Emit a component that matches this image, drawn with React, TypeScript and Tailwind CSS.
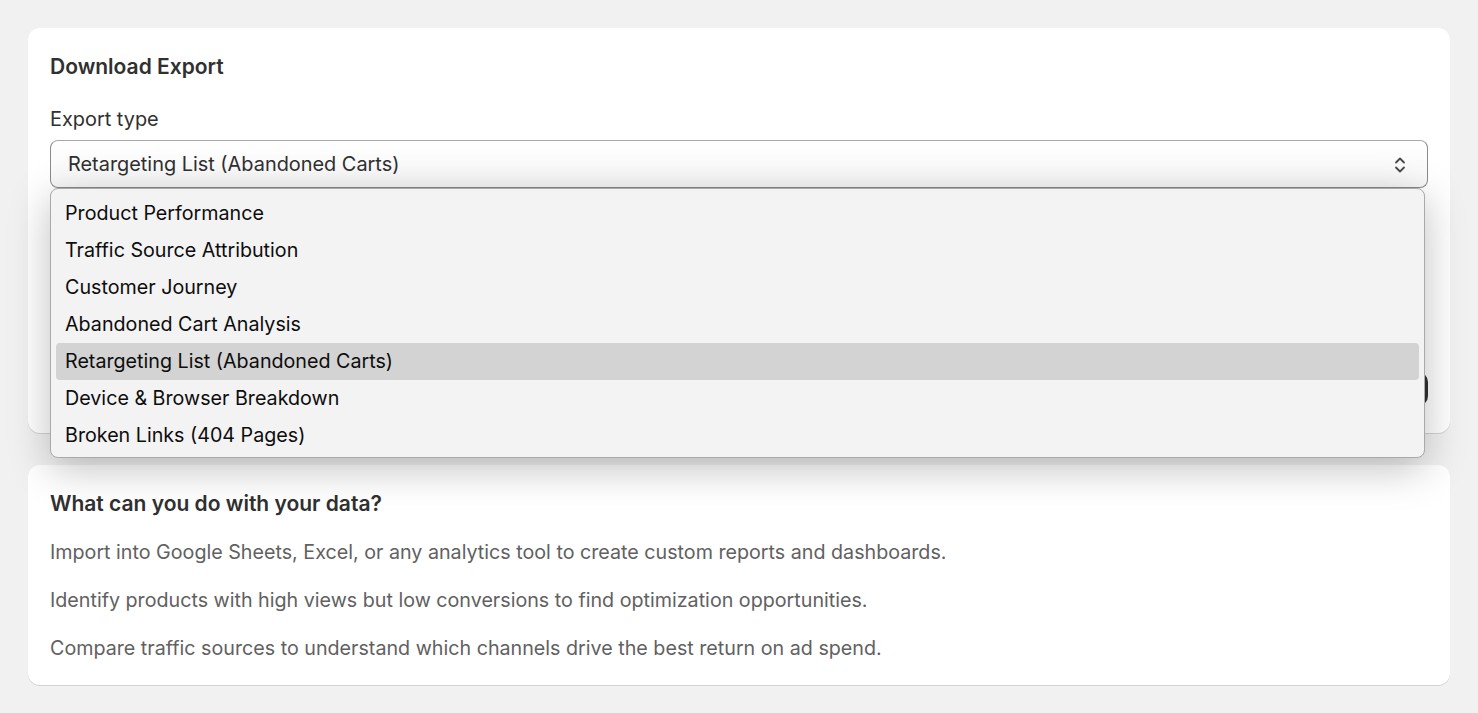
import React from "react";

const options = [
  "Product Performance",
  "Traffic Source Attribution",
  "Customer Journey",
  "Abandoned Cart Analysis",
  "Retargeting List (Abandoned Carts)",
  "Device & Browser Breakdown",
  "Broken Links (404 Pages)",
];

function Chevrons() {
  return (
    <svg width="14" height="20" viewBox="0 0 14 20" fill="none" stroke="#4a4a4a" strokeWidth="1.8" strokeLinecap="round" strokeLinejoin="round">
      <path d="M3 7.5 L7 3.5 L11 7.5" />
      <path d="M3 12.5 L7 16.5 L11 12.5" />
    </svg>
  );
}

export default function App() {
  return (
    <div
      className="min-h-screen bg-[#f1f1f1] px-[28px] pt-[28px] pb-[28px] flex flex-col gap-[32px]"
      style={{ fontFamily: "Inter, 'Noto Sans', sans-serif" }}
    >
      <div className="relative bg-white rounded-[12px] h-[405px] px-[22px] pt-[25px] pb-[27px] flex flex-col shadow-[0_1px_0_rgba(0,0,0,0.12)]">
        <h2 className="text-[21px] leading-[28px] font-semibold text-[#303030]">Download Export</h2>
        <div className="mt-[26px] text-[19.9px] leading-[24px] text-[#303030]">Export type</div>
        <div className="mt-[9px] h-[48px] rounded-[8px] border border-[#8a8a8a] border-t-[#a8a8a8] bg-gradient-to-b from-white to-[#f7f7f7] flex items-center justify-between pl-[17px] pr-[20px] pt-[2px] text-[19.9px] text-[#303030]">
          <span>Retargeting List (Abandoned Carts)</span>
          <Chevrons />
        </div>
        <div className="mt-auto flex justify-end">
          <div className="h-[34px] px-[18px] rounded-[10px] bg-[#303030] text-white text-[16px] font-semibold flex items-center">
            Download
          </div>
        </div>

        <div className="absolute left-[22px] top-[160px] w-[1375px] h-[270px] rounded-[8px] border border-[#a9a9a9] bg-[#f3f3f3] shadow-[0_10px_40px_rgba(0,0,0,0.25)] pt-[6px] px-[5px] z-10">
          {options.map((o) => (
            <div
              key={o}
              className={
                "h-[37px] rounded-[4px] flex items-center pl-[9px] text-[19.7px] text-[#0d0d0d] " +
                (o === "Retargeting List (Abandoned Carts)" ? "bg-[#d3d3d3]" : "")
              }
            >
              {o}
            </div>
          ))}
        </div>
      </div>

      <div className="bg-white rounded-[12px] h-[220px] px-[22px] pt-[25px] shadow-[0_1px_0_rgba(0,0,0,0.12)]">
        <h2 className="text-[21px] leading-[28px] font-semibold text-[#303030]">What can you do with your data?</h2>
        <div className="mt-[22px] flex flex-col gap-[24px] text-[19.7px] leading-[24px] text-[#616161]">
          <p>Import into Google Sheets, Excel, or any analytics tool to create custom reports and dashboards.</p>
          <p>Identify products with high views but low conversions to find optimization opportunities.</p>
          <p>Compare traffic sources to understand which channels drive the best return on ad spend.</p>
        </div>
      </div>
    </div>
  );
}
